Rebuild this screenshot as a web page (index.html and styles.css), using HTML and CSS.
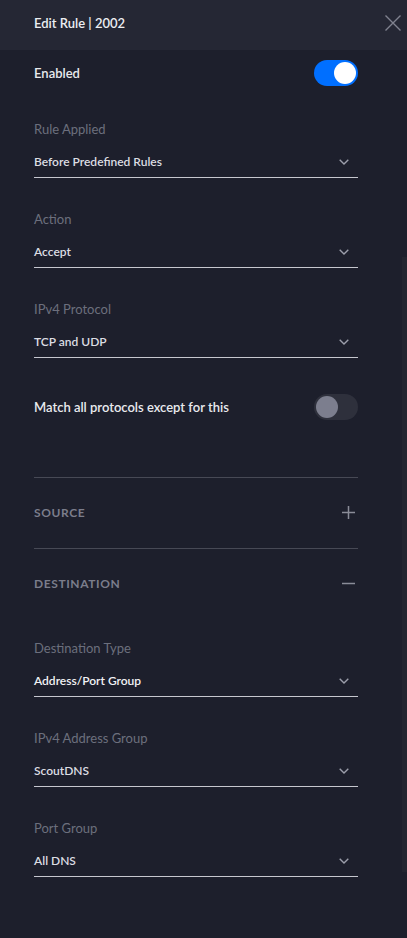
FILE: index.html
```html
<!DOCTYPE html>
<html lang="en">
<head>
<meta charset="utf-8">
<title>Edit Rule | 2002</title>
<link rel="stylesheet" href="styles.css">
</head>
<body>
<div class="panel">
  <header class="header">
    <h1 class="title">Edit Rule | 2002</h1>
    <button class="close" aria-label="Close">
      <svg width="16" height="16" viewBox="0 0 16 16"><path d="M0.5 0.5 L15.5 15.5 M15.5 0.5 L0.5 15.5" stroke="currentColor" stroke-width="1.4" fill="none"/></svg>
    </button>
  </header>

  <main class="content">
    <div class="toggle-row enabled-row">
      <span class="toggle-label">Enabled</span>
      <span class="switch on"><span class="knob"></span></span>
    </div>

    <div class="field first">
      <div class="field-label">Rule Applied</div>
      <div class="select"><span class="select-value">Before Predefined Rules</span><svg class="chev" width="10" height="6" viewBox="0 0 10 6"><path d="M0.7 0.7 L5 5 L9.3 0.7" stroke="currentColor" stroke-width="1.4" fill="none"/></svg></div>
    </div>

    <div class="field">
      <div class="field-label">Action</div>
      <div class="select"><span class="select-value">Accept</span><svg class="chev" width="10" height="6" viewBox="0 0 10 6"><path d="M0.7 0.7 L5 5 L9.3 0.7" stroke="currentColor" stroke-width="1.4" fill="none"/></svg></div>
    </div>

    <div class="field">
      <div class="field-label">IPv4 Protocol</div>
      <div class="select"><span class="select-value">TCP and UDP</span><svg class="chev" width="10" height="6" viewBox="0 0 10 6"><path d="M0.7 0.7 L5 5 L9.3 0.7" stroke="currentColor" stroke-width="1.4" fill="none"/></svg></div>
    </div>

    <div class="toggle-row match-row">
      <span class="toggle-label">Match all protocols except for this</span>
      <span class="switch off"><span class="knob"></span></span>
    </div>

    <div class="section source">
      <span class="section-title">SOURCE</span>
      <svg class="section-icon" width="13" height="13" viewBox="0 0 13 13"><path d="M6.5 0 V13 M0 6.5 H13" stroke="currentColor" stroke-width="1.5" fill="none"/></svg>
    </div>
    <div class="section destination">
      <span class="section-title">DESTINATION</span>
      <svg class="section-icon" width="13" height="13" viewBox="0 0 13 13"><path d="M0 6.5 H13" stroke="currentColor" stroke-width="1.5" fill="none"/></svg>
    </div>

    <div class="field">
      <div class="field-label">Destination Type</div>
      <div class="select"><span class="select-value strong">Address/Port Group</span><svg class="chev" width="10" height="6" viewBox="0 0 10 6"><path d="M0.7 0.7 L5 5 L9.3 0.7" stroke="currentColor" stroke-width="1.4" fill="none"/></svg></div>
    </div>

    <div class="field">
      <div class="field-label">IPv4 Address Group</div>
      <div class="select"><span class="select-value">ScoutDNS</span><svg class="chev" width="10" height="6" viewBox="0 0 10 6"><path d="M0.7 0.7 L5 5 L9.3 0.7" stroke="currentColor" stroke-width="1.4" fill="none"/></svg></div>
    </div>

    <div class="field">
      <div class="field-label">Port Group</div>
      <div class="select"><span class="select-value">All DNS</span><svg class="chev" width="10" height="6" viewBox="0 0 10 6"><path d="M0.7 0.7 L5 5 L9.3 0.7" stroke="currentColor" stroke-width="1.4" fill="none"/></svg></div>
    </div>
  </main>
  <div class="scroll-thumb"></div>
</div>
</body>
</html>
```

FILE: styles.css
```css
* { box-sizing: border-box; }

html, body {
  margin: 0;
  padding: 0;
  height: 100%;
}

body {
  background: #1d1f2c;
  font-family: Lato, "Open Sans", "Liberation Sans", sans-serif;
  color: #e4e5ea;
  overflow: hidden;
}

.panel {
  position: relative;
  min-height: 938px;
  background: #1d1f2c;
}

.header {
  height: 50px;
  background: #252734;
  display: flex;
  justify-content: space-between;
  align-items: flex-start;
  padding: 13px 6px 0 34px;
}

.title {
  margin: 0;
  font-size: 13px;
  line-height: 20px;
  font-weight: 600;
  color: #eceef2;
}

.close {
  margin-top: 2px;
  padding: 0;
  width: 16px;
  height: 16px;
  border: 0;
  background: none;
  color: #80828f;
  display: block;
}
.close svg { display: block; }

.content {
  padding: 0 49px 0 34px;
}

.toggle-row {
  display: flex;
  justify-content: space-between;
  align-items: center;
}

.enabled-row { height: 46px; }
.match-row { height: 26px; margin-top: 36px; }

.toggle-label {
  font-size: 13px;
  font-weight: 600;
  line-height: 20px;
  color: #e9eaee;
}

.switch {
  position: relative;
  width: 44px;
  height: 26px;
  border-radius: 13px;
  display: block;
}
.switch.on { background: #006fff; }
.switch.off { background: #2e303c; }

.knob {
  position: absolute;
  top: 2px;
  width: 22px;
  height: 22px;
  border-radius: 50%;
}
.switch.on .knob { right: 2px; background: #ffffff; }
.switch.off .knob { left: 2px; background: #7c7e8e; }

.field { margin-bottom: 31px; }
.field.first { margin-top: 23px; }

.field-label {
  font-size: 13px;
  line-height: 20px;
  color: #6c6f7d;
  margin-bottom: 13px;
}

.select {
  display: flex;
  align-items: center;
  justify-content: space-between;
  padding: 0 9px 5px 0;
  border-bottom: 1px solid #c6c7cf;
  height: 26px;
}

.select-value {
  font-size: 12px;
  line-height: 20px;
  font-weight: 600;
  color: #dcdde3;
}
.select-value.strong { color: #f1f2f5; }

.chev {
  display: block;
  color: #9c9eab;
}

.section {
  display: flex;
  align-items: center;
  justify-content: space-between;
  padding-right: 3px;
}
.section.source {
  margin-top: 57px;
  height: 72px;
  padding-bottom: 2px;
  border-top: 1px solid #474955;
  border-bottom: 1px solid #474955;
}
.section.destination {
  height: 69px;
  margin-bottom: 20px;
}

.section-title {
  font-size: 12px;
  font-weight: 700;
  letter-spacing: 0.6px;
  color: #7b7d8b;
}

.section-icon {
  display: block;
  color: #8a8c98;
}

.scroll-thumb {
  position: absolute;
  right: 0;
  top: 257px;
  width: 5px;
  height: 615px;
  background: #232530;
}
```
